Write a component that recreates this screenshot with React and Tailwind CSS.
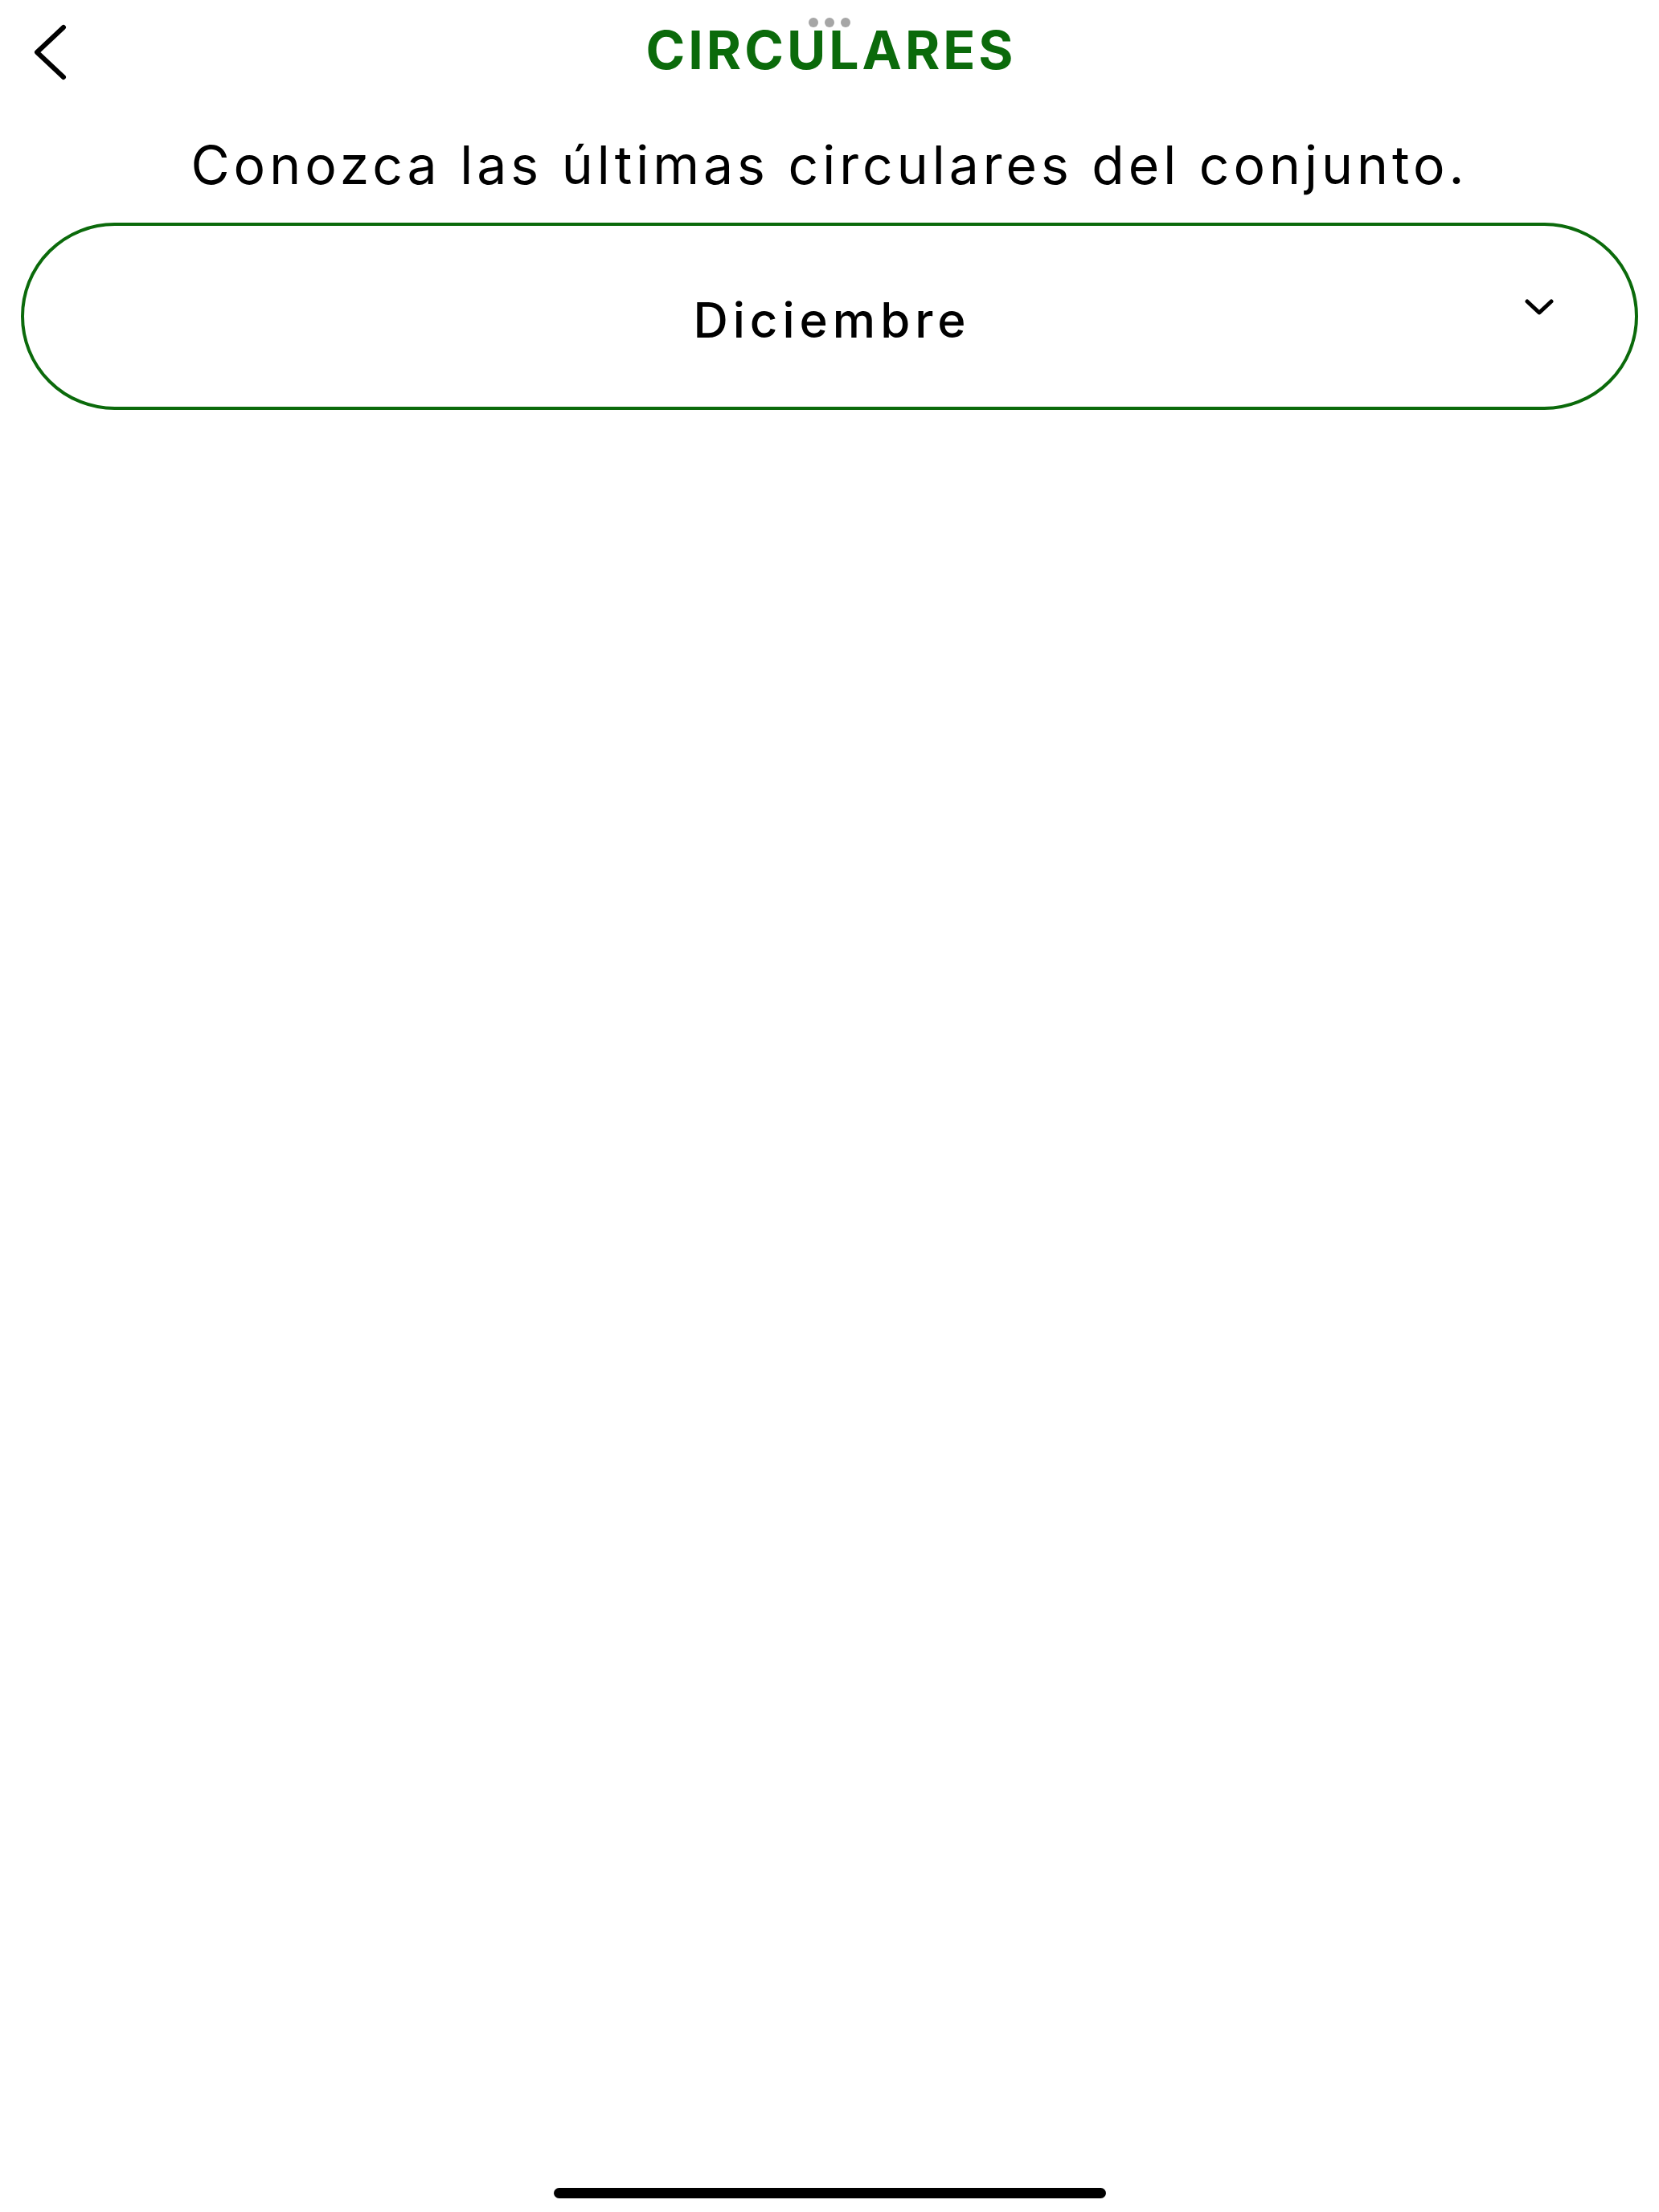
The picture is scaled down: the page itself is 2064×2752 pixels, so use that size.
import React from 'react';

const BackIcon = () => (
  <svg width="42" height="70" viewBox="0 0 42 70" fill="none">
    <polyline points="38,4 5,35 38,66" stroke="#000" strokeWidth="6" strokeLinecap="round" strokeLinejoin="round" />
  </svg>
);

const ChevronDown = () => (
  <svg width="36" height="20" viewBox="0 0 36 20" fill="none">
    <polyline points="3,3 18,17 33,3" stroke="#000" strokeWidth="5" strokeLinecap="round" strokeLinejoin="round" />
  </svg>
);

export default function App() {
  return (
    <div className="relative w-[2064px] h-[2752px] bg-white flex flex-col font-['Inter','Liberation_Sans',sans-serif] text-black">
      {/* multitasking dots */}
      <div className="absolute top-[22px] left-1/2 -translate-x-1/2 flex gap-[8px]">
        <span className="w-[12px] h-[12px] rounded-full bg-[#a6a6a6]" />
        <span className="w-[12px] h-[12px] rounded-full bg-[#a6a6a6]" />
        <span className="w-[12px] h-[12px] rounded-full bg-[#a6a6a6]" />
      </div>

      <header className="grid grid-cols-[1fr_auto_1fr] items-center h-[130px]">
        <button className="justify-self-start ml-[41px]">
          <BackIcon />
        </button>
        <h1 className="pb-[6px] pl-[4px] text-[66px] leading-none font-bold tracking-[4px] text-[#0b6a0b]">
          CIRCULARES
        </h1>
        <div />
      </header>

      <p className="mt-[42px] text-center text-[66px] leading-none tracking-[5px]">
        Conozca las últimas circulares del conjunto.
      </p>

      <div className="mt-[39px] mx-[26px] h-[233px] rounded-full border-[4px] border-[#0b6a0b] grid grid-cols-[1fr_auto_1fr] items-center">
        <div />
        <span className="pt-[8px] pl-[6px] text-[60px] leading-none font-medium tracking-[6px]">Diciembre</span>
        <div className="justify-self-end mr-[101px] mb-[23px] flex">
          <ChevronDown />
        </div>
      </div>

      <div className="flex-1" />

      <div className="self-center mb-[17px] w-[687px] h-[13px] rounded-full bg-black" />
    </div>
  );
}
